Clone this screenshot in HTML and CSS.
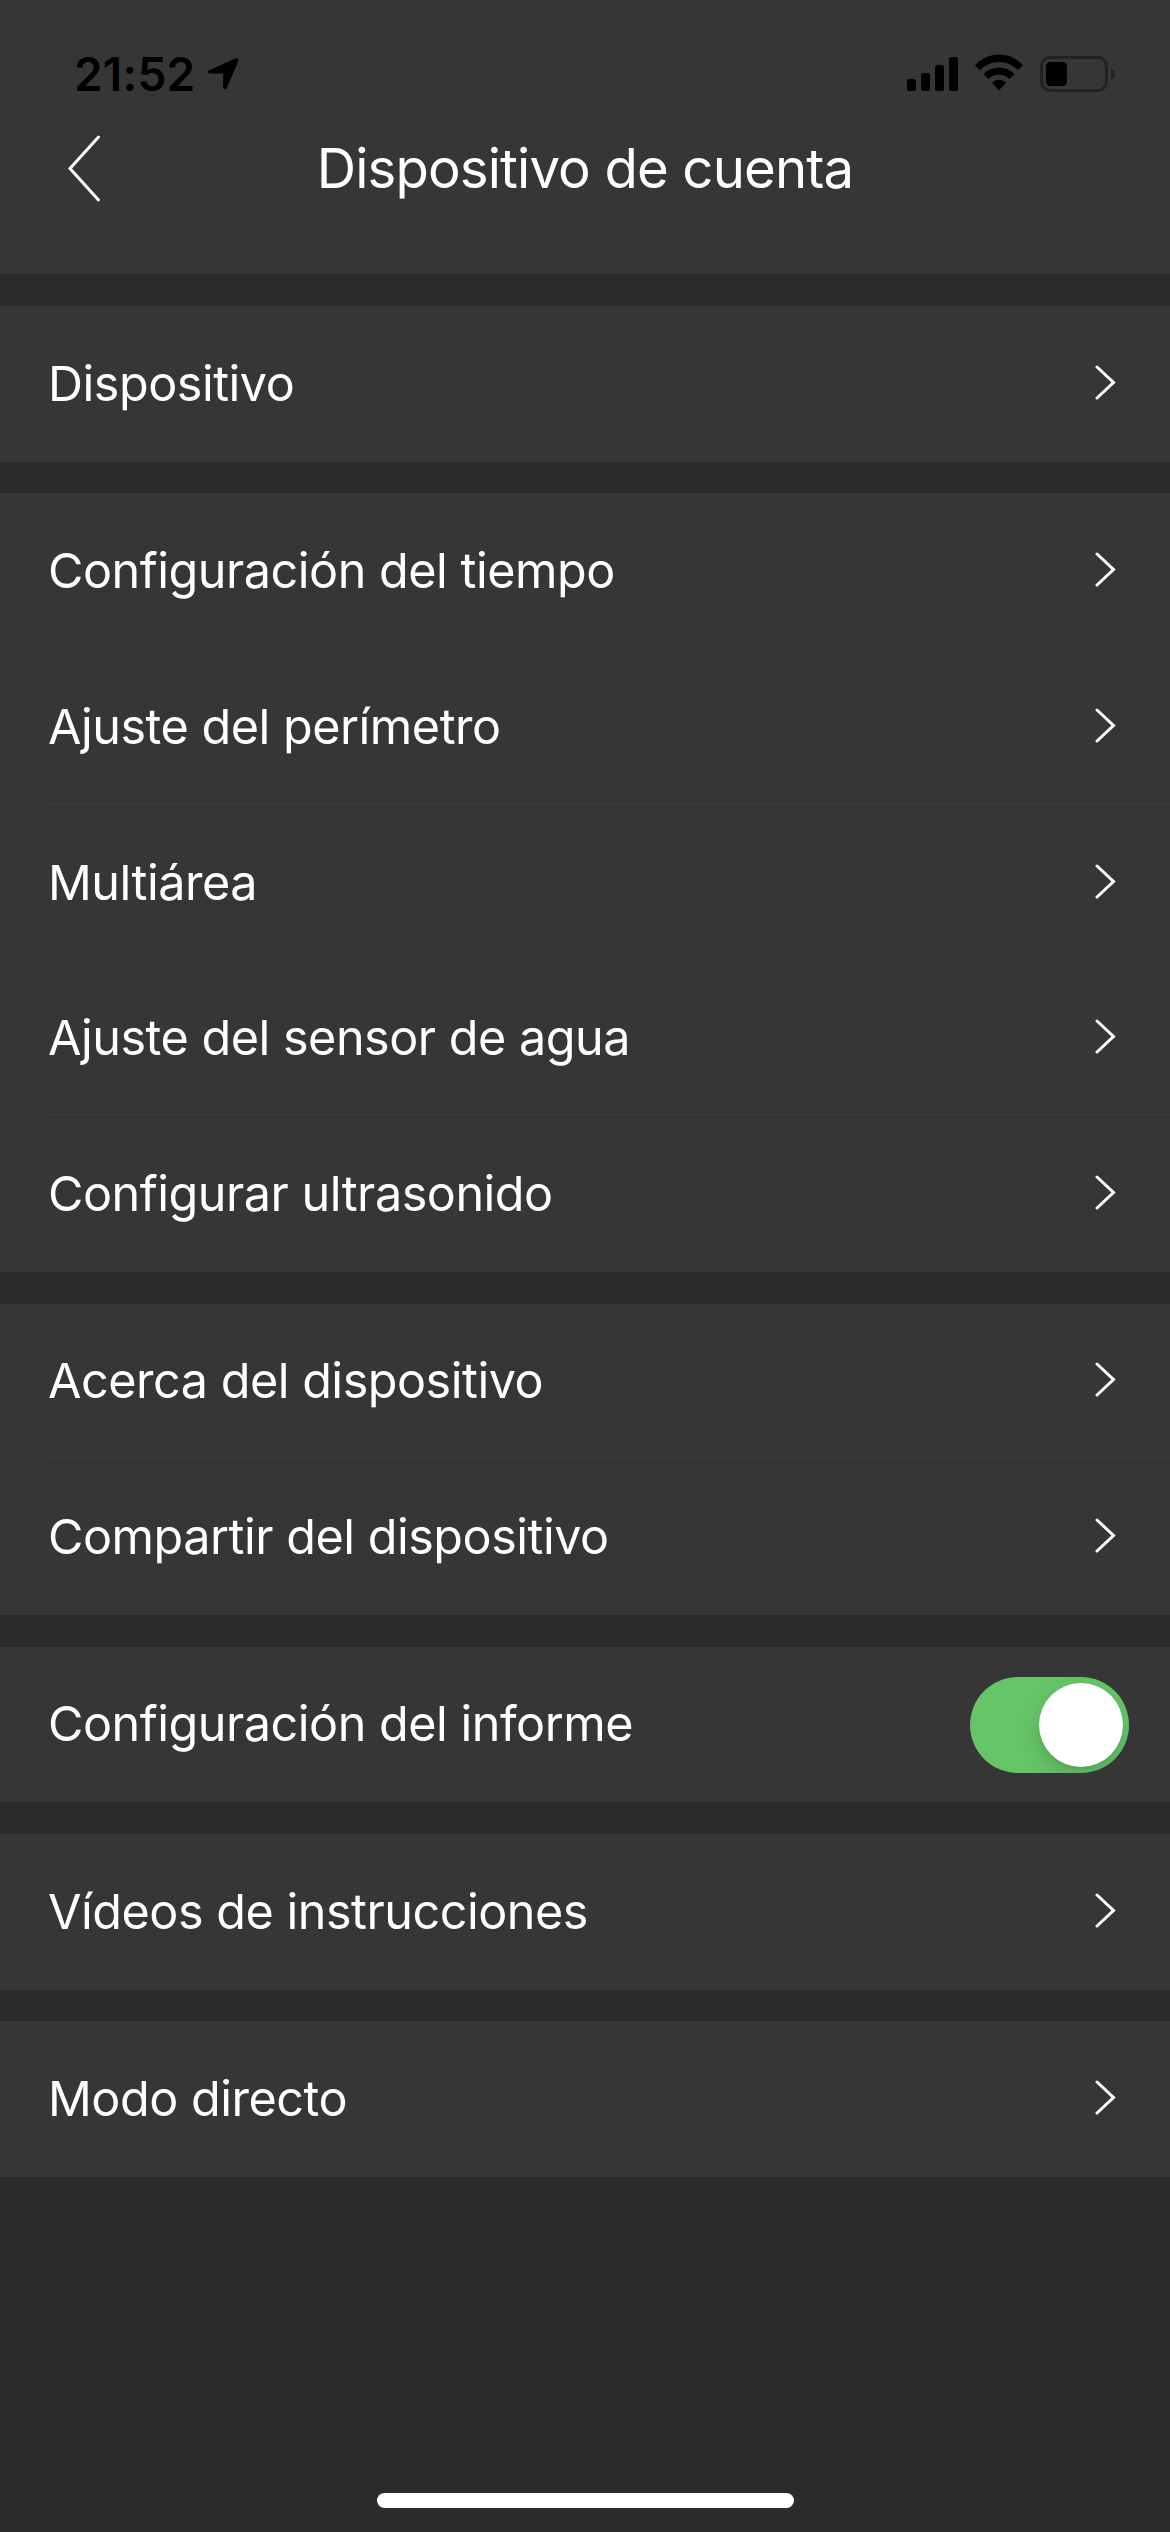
FILE: index.html
```html
<!DOCTYPE html>
<html lang="es">
<head>
<meta charset="utf-8">
<title>Dispositivo de cuenta</title>
<link rel="stylesheet" href="styles.css">
</head>
<body>
<svg class="defs" aria-hidden="true">
  <symbol id="chevron" viewBox="0 0 22 36"><path d="M2 2 L18.5 17.5 L2 33" fill="none" stroke="#fff" stroke-width="3" stroke-linecap="round" stroke-linejoin="miter"/></symbol>
</svg>
<div class="screen">
  <header class="header">
    <div class="status">
      <span class="time">21:52</span>
      <svg class="location" viewBox="0 0 32 32"><path d="M2.2 12.2 28.2 .6Q32.2-.7 31.2 3.3L20 29.5Q19 32 17.4 31.2Q16.2 30.8 16.2 29V16.4Q16.2 15.4 15.2 15.4H2.8Q.6 15.2.5 13.8Q.6 12.8 2.2 12.2Z"/></svg>
      <span class="spacer"></span>
      <svg class="signal" viewBox="0 0 51 34"><rect y="22" width="9" height="12" rx="2.6"/><rect x="14" y="16" width="9" height="18" rx="2.6"/><rect x="28" y="8" width="9" height="26" rx="2.6"/><rect x="42" width="9" height="34" rx="2.6"/></svg>
      <svg class="wifi" viewBox="0 0 50 37"><path d="M1 11.2Q11 .6 25 .5Q39 .6 49 11.2L44 16.2Q36 8 25 8Q14 8 6 16.2Z"/><path d="M9.5 20Q15.500 13.400 25 13.400Q34.500 13.400 40.500 20L35.500 25Q31.500 20.700 25 20.700Q18.500 20.700 14.500 25Z"/><path d="M18 28.800Q21 25.700 25 25.700Q29 25.700 32 28.800L25 36.200Z"/></svg>
      <svg class="battery" viewBox="0 0 76 36"><rect x="1.500" y="1.500" width="65" height="33" rx="8.500" fill="none" stroke="#222" stroke-width="3"/><path d="M71 12.500Q75 14 75 18T71 23.500Z" fill="#222"/><rect x="6" y="6" width="21" height="24" rx="4.500"/></svg>
    </div>
    <div class="nav">
      <svg class="back" viewBox="0 0 34 68"><path d="M31.500 2 3 33.500 31.500 65" fill="none" stroke="#fff" stroke-width="3" stroke-linecap="round"/></svg>
      <h1 class="title">Dispositivo de cuenta</h1>
    </div>
  </header>
  <main class="groups">
    <section class="group">
      <div class="row"><span class="label">Dispositivo</span><svg class="chevron"><use href="#chevron"/></svg></div>
    </section>
    <section class="group">
      <div class="row"><span class="label">Configuración del tiempo</span><svg class="chevron"><use href="#chevron"/></svg></div>
      <div class="row"><span class="label">Ajuste del perímetro</span><svg class="chevron"><use href="#chevron"/></svg></div>
      <div class="row"><span class="label">Multiárea</span><svg class="chevron"><use href="#chevron"/></svg></div>
      <div class="row"><span class="label">Ajuste del sensor de agua</span><svg class="chevron"><use href="#chevron"/></svg></div>
      <div class="row"><span class="label">Configurar ultrasonido</span><svg class="chevron"><use href="#chevron"/></svg></div>
    </section>
    <section class="group">
      <div class="row"><span class="label">Acerca del dispositivo</span><svg class="chevron"><use href="#chevron"/></svg></div>
      <div class="row"><span class="label">Compartir del dispositivo</span><svg class="chevron"><use href="#chevron"/></svg></div>
    </section>
    <section class="group">
      <div class="row row-switch"><span class="label">Configuración del informe</span><span class="switch"><span class="knob"></span></span></div>
    </section>
    <section class="group">
      <div class="row"><span class="label">Vídeos de instrucciones</span><svg class="chevron"><use href="#chevron"/></svg></div>
    </section>
    <section class="group">
      <div class="row"><span class="label">Modo directo</span><svg class="chevron"><use href="#chevron"/></svg></div>
    </section>
  </main>
  <div class="home"></div>
</div>
</body>
</html>
```
FILE: styles.css
```css
* { box-sizing: border-box; }
body { margin: 0; background: #2b2b2b; color: #fff; font-family: Inter, "Liberation Sans", sans-serif; }
.defs { position: absolute; width: 0; height: 0; }
.screen { width: 1170px; height: 2532px; display: flex; flex-direction: column; background: #2b2b2b; overflow: hidden; }
.header { height: 274px; background: #363636; flex: none; }
.status { height: 120px; padding: 54px 54px 0 74px; display: flex; align-items: flex-start; color: #000; }
.time { font-size: 46px; line-height: 40px; font-weight: 600; letter-spacing: 0.2px; width: 133px; white-space: nowrap; }
.location { width: 32px; height: 32px; margin-top: 4px; }
.spacer { flex: 1; }
.signal { width: 51px; height: 34px; margin-top: 3px; }
.wifi { width: 50px; height: 37px; margin: 0 16px 0 16px; }
.battery { width: 76px; height: 36px; margin-top: 2px; }
.nav { height: 96px; display: grid; grid-template-columns: 101px 1fr 101px; align-items: center; }
.back { width: 34px; height: 68px; justify-self: end; margin-top: 1px; }
.title { margin: 0; font-size: 54.5px; line-height: 96px; font-weight: 400; letter-spacing: -0.85px; text-align: center; white-space: nowrap; }
.groups { margin-top: 32px; display: flex; flex-direction: column; gap: 31.5px; }
.group { background: #363636; }
.row { height: 155.75px; margin-left: 48px; padding-right: 53px; display: flex; align-items: center; justify-content: space-between; }
.row:not(:last-child) { box-shadow: inset 0 -2px #3a3a3a; }
.row-switch { padding-right: 41px; }
.label { font-size: 48.5px; line-height: 60px; letter-spacing: -0.47px; white-space: nowrap; }
.chevron { width: 22px; height: 36px; margin-bottom: 2px; }
.switch { width: 159px; height: 96px; margin-top: 2px; border-radius: 48px; background: #66c568; padding: 6px; display: flex; justify-content: flex-end; overflow: hidden; }
.knob { width: 84px; height: 84px; border-radius: 50%; background: #fff; box-shadow: 0 9px 24px rgba(0,0,0,.15), 0 3px 3px rgba(0,0,0,.06); }
.home { width: 417px; height: 15px; border-radius: 8px; background: #fff; margin: auto auto 24px 377px; flex: none; }
```
